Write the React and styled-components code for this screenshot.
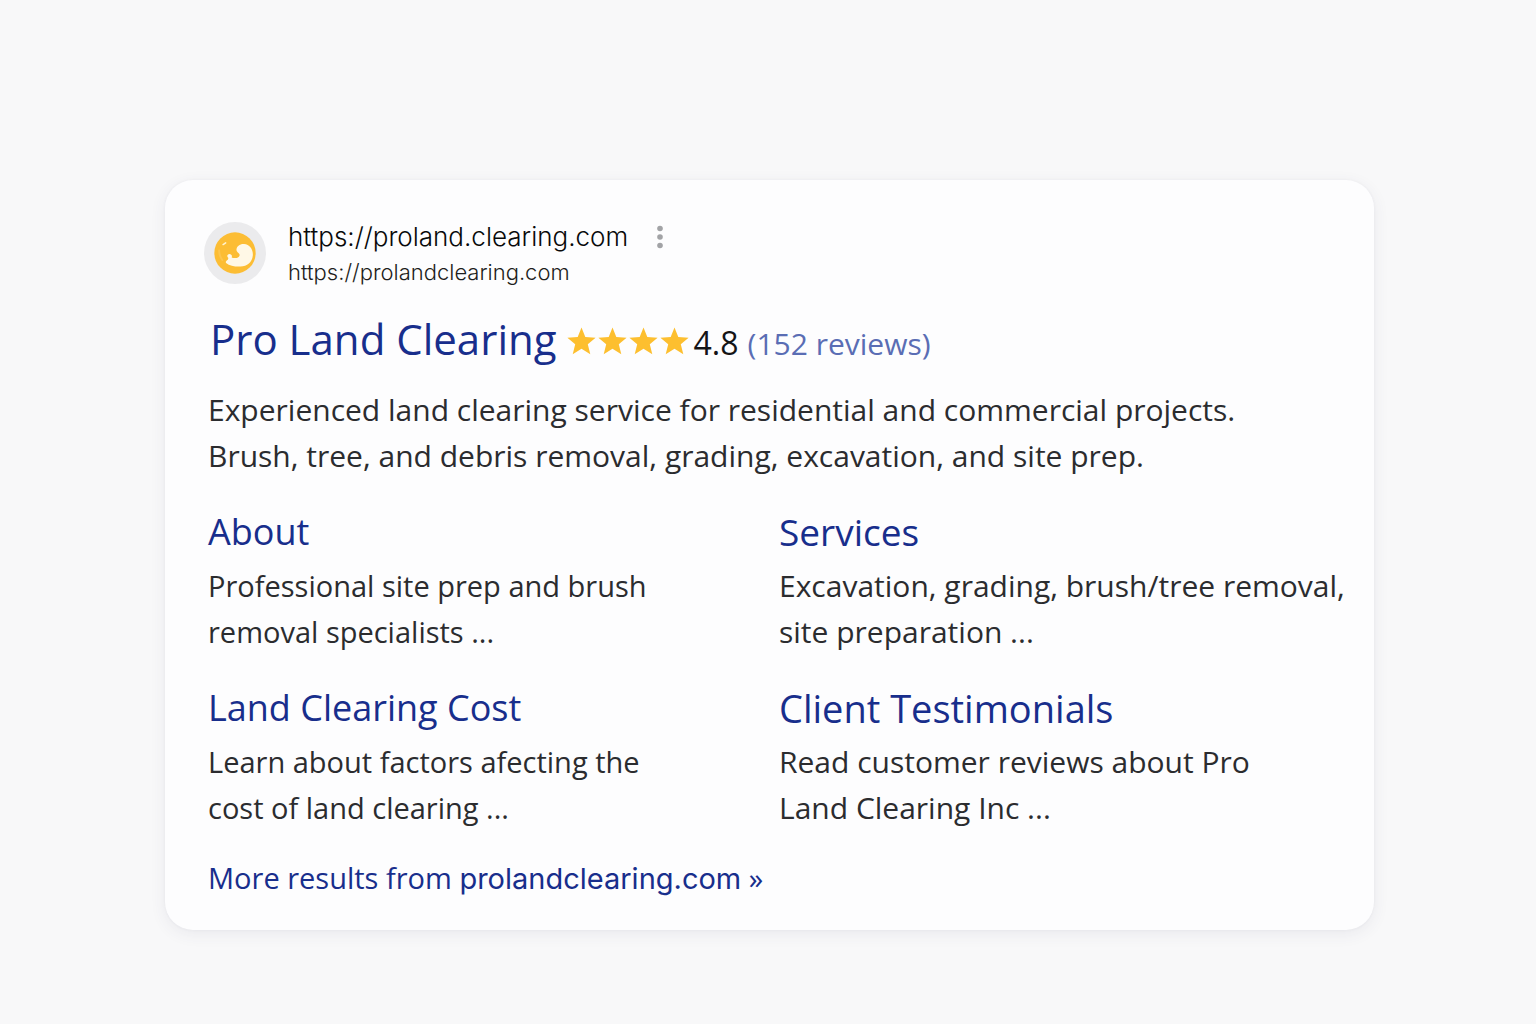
import React from 'react';
import styled, {createGlobalStyle} from 'styled-components';

const GlobalStyle = createGlobalStyle`
  body {
    margin: 0;
    background: #f8f8f9;
    font-family: 'Open Sans', 'Noto Sans', sans-serif;
    color: #2b2c2f;
  }
`;

const Page = styled.main`
  box-sizing: border-box;
  display: flex;
  justify-content: center;
  padding: 180px 162px 94px 165px;
`;

const Card = styled.article`
  box-sizing: border-box;
  width: 100%;
  max-width: 1210px;
  padding: 40px 24px 28px 43px;
  background: #fdfdfe;
  border-radius: 28px;
  box-shadow: 0 4px 16px rgba(60, 64, 100, 0.08), 0 0 3px rgba(60, 64, 100, 0.06);
`;

const Source = styled.header`
  display: flex;
  align-items: flex-start;
  gap: 22px;
  margin-left: -4px;
`;

const Avatar = styled.svg`
  flex: none;
  width: 62px;
  height: 62px;
  margin-top: 2px;
`;

const Urls = styled.div`
  display: flex;
  flex-direction: column;
  font-family: Inter, sans-serif;
  font-weight: 300;
`;

const SiteRow = styled.div`
  display: flex;
  align-items: center;
  gap: 22px;
`;

const SiteName = styled.span`
  font-size: 26px;
  line-height: 34px;
  color: #08090a;
`;

const SiteUrl = styled.cite`
  font-size: 22px;
  font-style: normal;
  line-height: 37px;
  color: #1d1e20;
`;

const MenuButton = styled.button`
  display: flex;
  padding: 0;
  border: 0;
  background: none;
  cursor: pointer;
`;

const Headline = styled.div`
  display: flex;
  align-items: baseline;
  gap: 10px;
  margin: 20px 0 20px 2px;
`;

const Title = styled.h1`
  margin: 0;
  font-size: 42px;
  font-weight: 400;
  line-height: 56px;
`;

const Link = styled.a`
  color: #182e8c;
  text-decoration: none;
  :hover {
    text-decoration: underline;
  }
`;

const Rating = styled.div`
  display: flex;
  align-items: baseline;
  gap: 5px;
  font-size: 32px;
  line-height: 46px;
`;

const Stars = styled.div`
  display: flex;
  gap: 2px;
`;

const Score = styled.span`
  color: #141416;
`;

const Reviews = styled.a`
  margin-left: 4px;
  font-size: 30px;
  color: #5a6db4;
  text-decoration: none;
`;

const Text = styled.p`
  margin: 0;
  font-size: ${props => (props.$large ? '30px' : '29px')};
  line-height: 46px;
`;

const Sitelinks = styled.div`
  display: grid;
  grid-template-columns: 1fr 1fr;
  row-gap: 29px;
  margin: 29px 0 24px;
`;

const SitelinkTitle = styled.h2`
  margin: 0 0 7px;
  font-size: ${props => props.$size}px;
  font-weight: 400;
  line-height: 48px;
`;

const More = styled.p`
  margin: 0;
  font-size: 29px;
  line-height: 46px;
`;

const Domain = styled.span`
  font-family: Inter, sans-serif;
`;

const sitelinks = [
  {title: 'About', size: 36, lines: ['Professional site prep and brush', 'removal specialists ...']},
  {
    title: 'Services',
    size: 37,
    large: true,
    lines: ['Excavation, grading, brush/tree removal,', 'site preparation ...']
  },
  {title: 'Land Clearing Cost', size: 36, lines: ['Learn about factors afecting the', 'cost of land clearing ...']},
  {title: 'Client Testimonials', size: 38, lines: ['Read customer reviews about Pro', 'Land Clearing Inc ...'], large: true}
];

const Lines = ({lines, large}) => (
  <Text $large={large}>
    {lines[0]}
    <br />
    {lines[1]}
  </Text>
);

const Star = () => (
  <svg width='29' height='28' viewBox='0 0 29 28' aria-hidden='true'>
    <path
      fill='#fdbf2f'
      d='M14.5 0.5 L18.3 9.9 L28.6 10.7 L20.8 17.3 L23.3 27.2 L14.5 21.8 L5.7 27.2 L8.2 17.3 L0.4 10.7 L10.7 9.9 Z'
    />
  </svg>
);

const Logo = () => (
  <Avatar viewBox='0 0 63 63' aria-hidden='true'>
    <circle cx='31.5' cy='31.5' r='31.5' fill='#ebebed' />
    <circle cx='31.5' cy='31.5' r='21' fill='#fcbd34' />
    <path
      fill='#fff8e6'
      d='M33 28.5 C32.8 24.8 36.5 22 40.7 22.3 C46.5 22.8 50.2 28 49.6 34 C49 40.8 43.8 45.2 37 45.2 C31.5 45.4 26 44.6 22.4 41.6 C21.7 40.4 22.6 39.2 24.2 38.3 L24.8 36.7 C22.8 35.4 23.6 32.5 25.8 32.4 C28 32.4 28.9 34.4 28.1 36.1 C30.2 37.1 33.6 36.8 35.2 35.5 C36.8 34 36.4 32.4 35 31.4 C33.8 30.6 33.1 29.7 33 28.5 Z'
    />
    <path stroke='#fff3d0' strokeWidth='1.6' strokeLinecap='round' d='M19.4 22.9 L22 21.2' />
    <path stroke='#fcc54f' strokeWidth='2' strokeLinecap='round' fill='none' d='M15.4 29 C15.4 33 16.6 36 18.6 38.6' />
  </Avatar>
);

export default () => (
  <Page>
    <GlobalStyle />
    <Card>
      <Source>
        <Logo />
        <Urls>
          <SiteRow>
            <SiteName>https://proland.clearing.com</SiteName>
            <MenuButton aria-label='About this result'>
              <svg width='20' height='24' viewBox='0 0 20 24' fill='#a2a3a6'>
                <circle cx='10' cy='3.5' r='2.8' />
                <circle cx='10' cy='12' r='2.8' />
                <circle cx='10' cy='20.5' r='2.8' />
              </svg>
            </MenuButton>
          </SiteRow>
          <SiteUrl>https://prolandclearing.com</SiteUrl>
        </Urls>
      </Source>
      <Headline>
        <Title>
          <Link href='#home'>Pro Land Clearing</Link>
        </Title>
        <Rating>
          <Stars role='img' aria-label='Four stars'>
            <Star />
            <Star />
            <Star />
            <Star />
          </Stars>
          <Score>4.8</Score>
          <Reviews href='#reviews'>(152 reviews)</Reviews>
        </Rating>
      </Headline>
      <Lines
        large
        lines={[
          'Experienced land clearing service for residential and commercial projects.',
          'Brush, tree, and debris removal, grading, excavation, and site prep.'
        ]}
      />
      <Sitelinks>
        {sitelinks.map(({title, size, lines, large}) => (
          <section key={title}>
            <SitelinkTitle $size={size}>
              <Link href='#sitelink'>{title}</Link>
            </SitelinkTitle>
            <Lines lines={lines} large={large} />
          </section>
        ))}
      </Sitelinks>
      <More>
        <Link href='#more'>
          More results from <Domain>prolandclearing.com</Domain> »
        </Link>
      </More>
    </Card>
  </Page>
);
